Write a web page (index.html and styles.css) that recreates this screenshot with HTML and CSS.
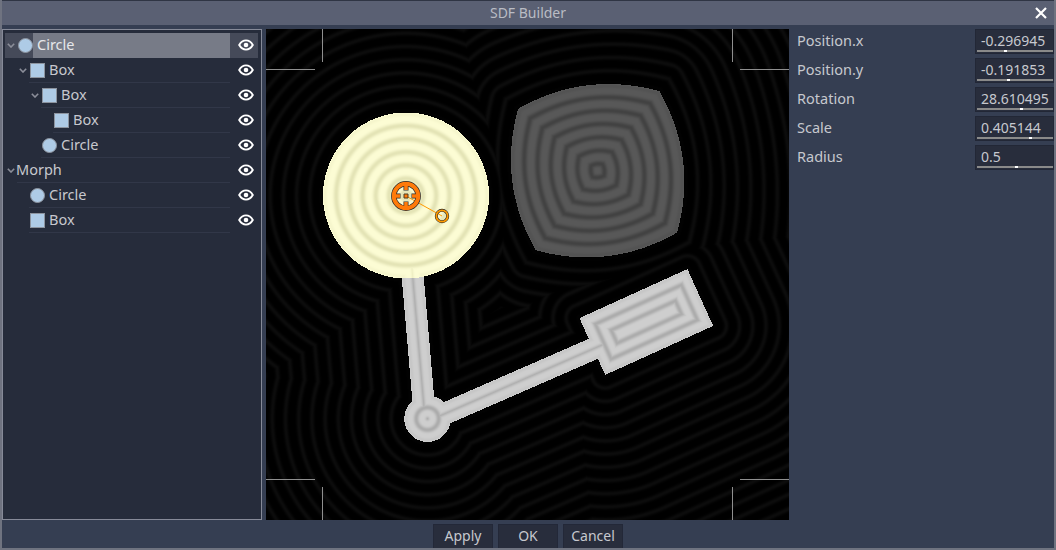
FILE: index.html
```html
<!DOCTYPE html>
<html lang="en">
<head>
    <meta charset="UTF-8">
    <title>SDF Builder</title>
    <link rel="stylesheet" href="styles.css">
</head>
<body>

<svg class="defs" width="0" height="0">
    <symbol id="eye" viewBox="0 0 16 12">
        <path d="M1.2 6C3 2.8 5.3 1.4 8 1.4S13 2.8 14.8 6C13 9.2 10.7 10.6 8 10.6S3 9.2 1.2 6Z" fill="none" stroke="#fff" stroke-width="1.9"/>
        <circle cx="8" cy="6" r="2.3" fill="#fff"/>
    </symbol>
    <symbol id="arrow" viewBox="0 0 8 5">
        <path d="M.8 .8L4 4L7.2 .8" fill="none" stroke="#8b8e99" stroke-width="1.6"/>
    </symbol>
</svg>

<div class="dialog">
    <div class="titlebar">
        <span>SDF Builder</span>
        <svg class="close" width="12" height="12" viewBox="0 0 12 12"><path d="M1 1L11 11M11 1L1 11" stroke="#fff" stroke-width="2.2"/></svg>
    </div>

    <div class="main">
        <ul class="tree">
            <li class="row lvl0 selected">
                <span class="cell"><svg class="arrow"><use href="#arrow"/></svg><i class="shape round"></i><span class="name">Circle</span></span>
                <svg class="eye"><use href="#eye"/></svg>
            </li>
            <li class="row lvl1">
                <span class="cell"><svg class="arrow"><use href="#arrow"/></svg><i class="shape"></i><span class="name">Box</span></span>
                <svg class="eye"><use href="#eye"/></svg>
            </li>
            <li class="row lvl2">
                <span class="cell"><svg class="arrow"><use href="#arrow"/></svg><i class="shape"></i><span class="name">Box</span></span>
                <svg class="eye"><use href="#eye"/></svg>
            </li>
            <li class="row lvl3">
                <span class="cell"><span class="arrow"></span><i class="shape"></i><span class="name">Box</span></span>
                <svg class="eye"><use href="#eye"/></svg>
            </li>
            <li class="row lvl2">
                <span class="cell"><span class="arrow"></span><i class="shape round"></i><span class="name">Circle</span></span>
                <svg class="eye"><use href="#eye"/></svg>
            </li>
            <li class="row lvl0 morph">
                <span class="cell"><svg class="arrow"><use href="#arrow"/></svg><span class="name">Morph</span></span>
                <svg class="eye"><use href="#eye"/></svg>
            </li>
            <li class="row lvl1">
                <span class="cell"><span class="arrow"></span><i class="shape round"></i><span class="name">Circle</span></span>
                <svg class="eye"><use href="#eye"/></svg>
            </li>
            <li class="row lvl1">
                <span class="cell"><span class="arrow"></span><i class="shape"></i><span class="name">Box</span></span>
                <svg class="eye"><use href="#eye"/></svg>
            </li>
        </ul>

        <div class="viewport">
            <canvas id="sdf" width="523" height="491"></canvas>
            <svg class="overlay" width="523" height="491" viewBox="0 0 523 491">
                <g class="guides">
                    <path d="M0 40.5H49M56.5 0V33M523 40.5H474M466.5 0V33M0 450.5H49M56.5 491V458M523 450.5H474M466.5 491V458"/>
                </g>
                <path d="M140 167L176 187" stroke="#ff9a00" stroke-width="1"/>
                <circle cx="176" cy="187" r="5.7" fill="none" stroke="#2a2a2a" stroke-width="3"/>
                <circle cx="176" cy="187" r="5.7" fill="none" stroke="#ff9a00" stroke-width="1.8"/>
                <circle cx="140" cy="167" r="12.2" fill="none" stroke="#2a2a2a" stroke-width="5.4"/>
                <path d="M140 157V161.5M140 172.5V177M130 167H134.5M145.5 167H150" stroke="#2a2a2a" stroke-width="5"/>
                <circle cx="140" cy="167" r="12.2" fill="none" stroke="#ff7a0a" stroke-width="4"/>
                <path d="M140 156V161M140 173V178M129 167H134M146 167H151" stroke="#ff7a0a" stroke-width="3.6"/>
                <path d="M138 165h4v4h-4z" fill="#ff7a0a" stroke="#4a3a20" stroke-width="1"/>
            </svg>
        </div>

        <div class="props">
            <div class="prop"><span class="label">Position.x</span><div class="field"><span>-0.296945</span><div class="slider"><b style="left: 27px"></b></div></div></div>
            <div class="prop"><span class="label">Position.y</span><div class="field"><span>-0.191853</span><div class="slider"><b style="left: 30px"></b></div></div></div>
            <div class="prop"><span class="label">Rotation</span><div class="field"><span>28.610495</span><div class="slider"><b style="left: 43px"></b></div></div></div>
            <div class="prop"><span class="label">Scale</span><div class="field"><span>0.405144</span><div class="slider"><b style="left: 52px"></b></div></div></div>
            <div class="prop"><span class="label">Radius</span><div class="field"><span>0.5</span><div class="slider"><b style="left: 38px"></b></div></div></div>
        </div>
    </div>

    <div class="footer">
        <button type="button">Apply</button>
        <button type="button">OK</button>
        <button type="button">Cancel</button>
    </div>
</div>

<script src="main.js"></script>
</body>
</html>
```

FILE: styles.css
```css
html, body {
    margin: 0;
    height: 100%;
    overflow: hidden;
    background-color: #6f7380;
}
.defs {
    display: block;
}
.dialog {
    width: 1056px;
    height: 550px;
    display: flex;
    flex-direction: column;
    box-sizing: border-box;
    border-left: 2px solid #6f7380;
    border-right: 2px solid #6f7380;
    border-bottom: 2px solid #6f7380;
    background-color: #353e52;
    font-family: "Noto Sans", sans-serif;
    font-size: 14px;
    color: #c6c8ce;
}
.titlebar {
    height: 25px;
    flex: none;
    display: flex;
    align-items: center;
    justify-content: center;
    position: relative;
    background-color: #5a6073;
    color: #b9bcc4;
    box-shadow: inset 0 1px 0 #2f3544;
}
.close {
    position: absolute;
    right: 7px;
    top: 7px;
}
.main {
    flex: 1;
    display: flex;
    padding-top: 4px;
    min-height: 0;
}
.tree {
    list-style: none;
    width: 260px;
    height: 491px;
    flex: none;
    box-sizing: border-box;
    margin: 0 4px 0 0;
    padding: 3px 3px 0 2px;
    background-color: #262c3b;
    border: 1px solid #868a98;
}
.row {
    height: 25px;
    display: flex;
}
.cell {
    flex: 1;
    display: flex;
    align-items: center;
    min-width: 0;
    box-sizing: border-box;
    border-bottom: 1px solid #313748;
    font-size: 14.5px;
}
.lvl0 .cell { margin-left: 12px; }
.lvl1 .cell { margin-left: 24px; }
.lvl2 .cell { margin-left: 36px; }
.lvl3 .cell { margin-left: 48px; }
.arrow {
    width: 8px;
    height: 5px;
    margin-left: -10px;
    margin-right: 2px;
    flex: none;
}
.shape {
    width: 13px;
    height: 13px;
    margin-left: 1px;
    flex: none;
    background-color: #aecbe6;
    border: 1px solid #8d949f;
}
.round {
    border-radius: 50%;
}
.name {
    margin-left: 4px;
    margin-bottom: 2px;
    line-height: 22px;
}
.morph .name {
    margin-left: -1px;
}
.eye {
    width: 16px;
    height: 12px;
    flex: none;
    padding: 6px 4px 7px 8px;
}
.selected {
    background-color: #454a59;
}
.selected .cell {
    border-bottom: none;
}
.selected .name {
    flex: 1;
    align-self: stretch;
    margin-left: 0;
    margin-bottom: 0;
    padding-left: 4px;
    background-color: #777b87;
    color: #e6e7ea;
}
.viewport {
    position: relative;
    width: 523px;
    height: 491px;
    flex: none;
    background-color: #000;
}
.viewport canvas {
    display: block;
}
.overlay {
    position: absolute;
    left: 0;
    top: 0;
}
.guides path {
    fill: none;
    stroke: #8f8f8f;
    stroke-width: 1;
}
.props {
    flex: 1;
    display: flex;
    flex-direction: column;
    gap: 4px;
    padding-left: 8px;
}
.prop {
    height: 25px;
    display: flex;
    justify-content: space-between;
    line-height: 22px;
}
.label {
    font-size: 14.5px;
}
.field {
    width: 79px;
    height: 25px;
    position: relative;
    box-sizing: border-box;
    padding-left: 5px;
    background-color: #282d3c;
    border: 1px solid #222736;
    color: #c6c8ce;
    white-space: nowrap;
}
.slider {
    position: absolute;
    left: 1px;
    right: 0;
    bottom: 1px;
    height: 2px;
    background-color: #8a8a8a;
}
.slider b {
    position: absolute;
    top: 0;
    width: 3px;
    height: 2px;
    background-color: #fff;
}
.footer {
    height: 24px;
    flex: none;
    display: flex;
    justify-content: center;
    gap: 5px;
    padding-top: 4px;
    box-sizing: content-box;
    overflow: hidden;
}
button {
    height: 25px;
    width: 60px;
    padding: 0 0 3px;
    font: inherit;
    color: #c6c8ce;
    background-color: #282d3c;
    border: 1px solid #232838;
    border-bottom: none;
}
```

FILE: main.js
```js
// signed distance preview, page coordinates minus the canvas origin
const OX = 266, OY = 29;
const PERIOD = 13.2;

function circle(x, y, cx, cy, r) {
    return Math.hypot(x - cx, y - cy) - r;
}

function box(x, y, cx, cy, hw, hh, angle) {
    const c = Math.cos(angle), s = Math.sin(angle);
    const dx = x - cx, dy = y - cy;
    const qx = Math.abs(dx * c + dy * s) - hw;
    const qy = Math.abs(-dx * s + dy * c) - hh;
    return Math.hypot(Math.max(qx, 0), Math.max(qy, 0)) + Math.min(Math.max(qx, qy), 0);
}

function capsule(x, y, ax, ay, bx, by, r) {
    const px = x - ax, py = y - ay, vx = bx - ax, vy = by - ay;
    const t = Math.max(0, Math.min(1, (px * vx + py * vy) / (vx * vx + vy * vy)));
    return Math.hypot(px - vx * t, py - vy * t) - r;
}

// 0..1 band that peaks every period, faded right next to the surface
function rings(d, period, power) {
    const wave = 0.5 + 0.5 * Math.cos(2 * Math.PI * d / period);
    return Math.pow(wave, power) * Math.min(1, Math.abs(d) / 5);
}

function draw() {
    const canvas = document.getElementById('sdf');
    const ctx = canvas.getContext('2d');
    const img = ctx.createImageData(canvas.width, canvas.height);
    const morphAngle = -7.1 * Math.PI / 180;
    const rectAngle = -24.4 * Math.PI / 180;

    for (let j = 0; j < canvas.height; j++) {
        for (let i = 0; i < canvas.width; i++) {
            const x = i + OX + 0.5, y = j + OY + 0.5;

            const disc = circle(x, y, 406, 195.5, 83);
            const morph = 0.5 * box(x, y, 597.6, 170.7, 86, 86, morphAngle) + 0.5 * circle(x, y, 597.6, 170.7, 86);
            const frame = Math.min(
                capsule(x, y, 409.5, 240, 425, 419, 11),
                capsule(x, y, 427, 421.5, 602, 345, 11),
                circle(x, y, 427.5, 418.7, 23.2),
                box(x, y, 646.3, 322, 59.3, 31.2, rectAngle)
            );
            const d = Math.min(disc, morph, frame);

            let r, g, b;
            if (disc < 0) {
                const ring = rings(d, PERIOD, 2);
                r = g = 252 - 24 * ring;
                b = 212 - 30 * ring;
            } else if (d > 0) {
                r = g = b = 12 * rings(d, PERIOD, 3);
            } else if (d === morph) {
                r = g = b = 88 - 22 * rings(d, PERIOD, 2);
            } else {
                r = g = b = 206 - 34 * rings(d, 12, 2);
            }

            const k = (j * canvas.width + i) * 4;
            img.data[k] = r;
            img.data[k + 1] = g;
            img.data[k + 2] = b;
            img.data[k + 3] = 255;
        }
    }
    ctx.putImageData(img, 0, 0);
}

document.addEventListener('DOMContentLoaded', draw);
```
